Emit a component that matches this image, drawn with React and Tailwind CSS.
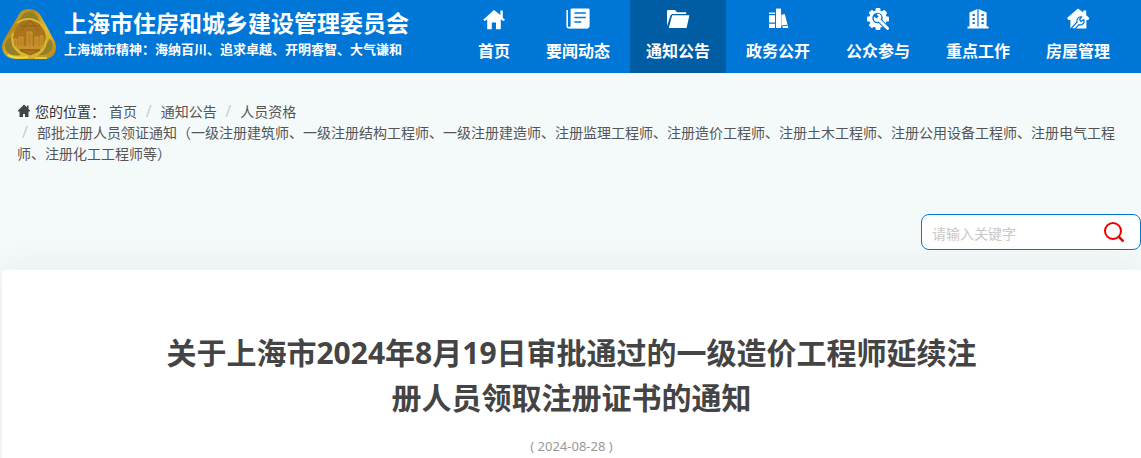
import React, { useState } from 'react';

const HomeIcon = () => (
  <svg className="h-6 w-6" viewBox="0 0 24 24" fill="#fff" aria-hidden="true">
    <path d="M12 3 1.2 12.8 2.6 14 5.2 12.4v9.800h4.600v-6.600h4.200v6.600h4.800v-9.800l2.800 1.600 1.400-1.200-2.200-2V3.600h-2.400V8z" />
  </svg>
);

const NewsIcon = () => (
  <svg className="h-6 w-6" viewBox="0 0 24 24" fill="none" aria-hidden="true">
    <path d="M1.200 3v16.200q0 1.400 1.400 1.400H22" stroke="#fff" strokeWidth="1.600" />
    <path fill="#fff" d="M5.600 1.400h16.600q1.400 0 1.400 1.400v16q0 2.400-1.800 2.400H3q1.600 0 1.600-1.600V2.400q0-1 1-1z" />
    <path d="M8.400 6h11.400M8.400 10.500h11.400M8.400 15h6.800" stroke="#0076d7" strokeWidth="1.700" />
  </svg>
);

const FolderIcon = () => (
  <svg className="h-6 w-6" viewBox="0 0 24 24" fill="#fff" aria-hidden="true">
    <path d="M1 19V4.200Q1 3 2.200 3H9l2 2.200h9.200V7H6L4.600 8.200z" />
    <path d="M6.200 8.200h17.200L20.600 21H2.800z" />
  </svg>
);

const BooksIcon = () => (
  <svg className="h-6 w-6" viewBox="0 0 24 24" fill="#fff" aria-hidden="true">
    <path d="M3 5.500h6v1.500H3zM3 8.200h6v7.200H3zM3 16.800h6V21H3z" />
    <path d="M10 1.600h5V21h-5z" />
    <path d="m15.400 7.800 3.400-.8 3.600 14h-5.200l-1.800-2z" />
    <path d="m15.400 19 6.200-.8" stroke="#0076d7" strokeWidth="1" />
  </svg>
);

const GearIcon = () => (
  <svg className="h-6 w-6" viewBox="0 0 24 24" aria-hidden="true">
    <g fill="#fff">
      <circle cx="12" cy="12" r="8.800" />
      <rect x="9.600" y="1" width="4.800" height="22" rx="1" />
      <rect x="9.600" y="1" width="4.800" height="22" rx="1" transform="rotate(45 12 12)" />
      <rect x="9.600" y="1" width="4.800" height="22" rx="1" transform="rotate(90 12 12)" />
      <rect x="9.600" y="1" width="4.800" height="22" rx="1" transform="rotate(135 12 12)" />
    </g>
    <circle cx="11.500" cy="11" r="5.200" fill="#0076d7" />
    <path d="m12 12 10 10" stroke="#0076d7" strokeWidth="4.600" />
    <path d="m12 12 9.600 9.600" stroke="#fff" strokeWidth="2.800" strokeLinecap="round" />
    <path d="m8 9.500 2.600 1.900 2-2L10.500 7q3-.8 4.500 1.500.8 1.800 0 3.500l-3 3Q8.500 15 7.800 12.500z" fill="#fff" />
  </svg>
);

const BuildingIcon = () => (
  <svg className="h-6 w-6" viewBox="0 0 24 24" aria-hidden="true">
    <path fill="#fff" d="M1.500 19.600h2V5.400L11.400 2v17.600h1.200V2l8 3.400v14.200h2V21.400h-21z" />
    <path d="M7.700 7v11M16.600 7v11" stroke="#0076d7" strokeWidth="2.200" strokeDasharray="2 2" />
  </svg>
);

const HouseToolIcon = () => (
  <svg className="h-6 w-6" viewBox="0 0 24 24" aria-hidden="true">
    <path fill="#fff" d="M12 1.400 1 11l1.400 2h2v8.600h16V13h2l1-2-3.200-2.800V3.600h-3v2z" />
    <path d="M5 21.600 11 15q-.6-3.800 3.200-5.200l1.400.2-2 2.400 1.400 2.200 2.800-2q1.200 3.600-2.200 5-1.400.4-2.600 0l-4 4.200z" fill="#fff" stroke="#0076d7" strokeWidth="1.200" />
  </svg>
);

const Logo = () => (
  <svg className="h-[52px] w-[54px] shrink-0" viewBox="0 0 54 52" aria-hidden="true">
    <defs>
      <linearGradient id="rim" x1="0" y1="0" x2="1" y2="1">
        <stop offset="0" stopColor="#e2bd30" />
        <stop offset=".3" stopColor="#b98817" />
        <stop offset=".6" stopColor="#e3c02f" />
        <stop offset="1" stopColor="#b58116" />
      </linearGradient>
    </defs>
    <path d="M16 8Q19 1 27 1t12 7l12 22q3 4 3 9 0 11-11 12H13Q1 50 0 39q0-5 3-9z" fill="url(#rim)" />
    <path d="M18 12q3-8 9-8 7 0 10 8l3 6-12-5-12 5z" fill="#92802a" />
    <path d="M5 32q-4 6 0 12 5 5 14 3l-9-9V28zM48 30q5 8 1 13-5 5-13 4l8-10z" fill="#92802a" />
    <path d="m28 11 8 3 6 6 2 9-2 7-6 8-8 3-9-3-6-7-2-8 3-9 6-6z" fill="#a9741d" />
    <path d="M15 15q11-8 23 0l12 17M11 25q-4 15 11 22l10 2M44 32q0 12-14 17" fill="none" stroke="#d9b636" strokeWidth="2" />
    <path d="m28 12-9 11M28 12l9 11M18 18h20M18 42h20l-10 5z" fill="none" stroke="#8d5c17" strokeWidth=".8" />
    <path d="M12 31h3v7h-3zM17 29h4v9h-4zM25 24h5v14h-5zM33 29h3v9h-3zM38 28h3v10h-3z" fill="#bd8325" stroke="#d5a231" strokeWidth=".8" />
    <path d="M13 38h28l-3 3H17z" fill="#c8922a" />
    <path d="M6 47q7 4 20 2M33 50h12" fill="none" stroke="#f2e03a" strokeWidth="1.500" />
  </svg>
);

const menus = [
  { name: '首页', icon: HomeIcon },
  { name: '要闻动态', icon: NewsIcon },
  { name: '通知公告', icon: FolderIcon, active: true },
  { name: '政务公开', icon: BooksIcon },
  { name: '公众参与', icon: GearIcon },
  { name: '重点工作', icon: BuildingIcon },
  { name: '房屋管理', icon: HouseToolIcon },
];

const crumbs = [
  '通知公告',
  '人员资格',
  '部批注册人员领证通知（一级注册建筑师、一级注册结构工程师、一级注册建造师、注册监理工程师、注册造价工程师、注册土木工程师、注册公用设备工程师、注册电气工程师、注册化工工程师等）',
];

const Header = () => (
  <header className="flex h-[73px] items-start justify-between bg-[#0076d7] pr-[15px] text-white">
    <a href="#" className="flex items-start gap-2 pl-0.5 pt-2">
      <Logo />
      <div>
        <p className="text-[23px] leading-[30px] font-bold">上海市住房和城乡建设管理委员会</p>
        <p className="text-[13px] leading-[22px] font-bold">上海城市精神：海纳百川、追求卓越、开明睿智、大气谦和</p>
      </div>
    </a>
    <nav className="flex h-full gap-1">
      {menus.map(({ name, icon: Icon, active }) => (
        <a
          key={name}
          href="#"
          className={`flex flex-col items-center px-4 pt-[7px] ${active ? 'bg-[#005da3]' : ''}`}
        >
          <Icon />
          <span className="pt-2 text-base leading-6 font-bold">{name}</span>
        </a>
      ))}
    </nav>
  </header>
);

const Breadcrumb = () => (
  <nav className="pt-7 pr-4 pl-[17px] text-sm leading-[21px] text-[#555]">
    <svg className="mr-1 inline-block h-3.5 w-3.5 align-[-1px]" viewBox="0 0 14 14" fill="#444" aria-hidden="true">
      <path d="M7 0.500 1 6.500v1h1.500v5.500H6V10h2v3h3.500V7.500H13v-1L11.500 5V1.500H10V3.200z" />
    </svg>
    <span className="mr-1 inline-block text-[#333]">您的位置：</span>
    <ol className="inline">
      <li className="inline-block">
        <a href="#">首页</a>
      </li>
      {crumbs.map((item) => (
        <React.Fragment key={item}>
          {' '}
          <li className="inline-block align-top">
            <span className="inline-block w-5 pr-1 text-center text-base leading-none text-[#ccc]">/</span>
            <a href="#">{item}</a>
          </li>
        </React.Fragment>
      ))}
    </ol>
  </nav>
);

const SearchBox = () => {
  const [keyword, setKeyword] = useState('');

  return (
    <form
      className="ml-auto flex h-9 w-[220px] items-center rounded-lg border border-[#0076d7] bg-white pr-4 pl-2.5"
      onSubmit={(e) => e.preventDefault()}
    >
      <input
        type="text"
        aria-label="请输入关键字"
        placeholder="请输入关键字"
        value={keyword}
        onChange={(e) => setKeyword(e.target.value)}
        className="min-w-0 flex-1 pt-1 text-sm outline-none placeholder:text-[#c8c8c8]"
      />
      <button type="submit" aria-label="搜索">
        <svg className="h-5 w-5" viewBox="0 0 20 20" fill="none" stroke="#f00000" strokeWidth="2" aria-hidden="true">
          <circle cx="9" cy="9" r="8" />
          <path d="m14.500 14.500 5 5" strokeWidth="2.500" />
        </svg>
      </button>
    </form>
  );
};

const App = () => {
  return (
    <div className="flex min-h-screen flex-col overflow-hidden bg-[#f4fafa] font-['Noto_Sans','Noto_Sans_CJK_SC',sans-serif]">
      <Header />
      <Breadcrumb />
      <div className="pt-[50px] pb-5">
        <SearchBox />
      </div>
      <main className="ml-0.5 flex-1 rounded-tl-sm bg-white pt-15 text-center shadow-[0_0_40px_rgba(0,40,80,0.07)]">
        <h1 className="mx-auto w-[72%] text-[30px] leading-[45px] font-bold text-[#444]">
          关于上海市2024年8月19日审批通过的一级造价工程师延续注册人员领取注册证书的通知
        </h1>
        <p className="pt-4 text-[13px] leading-5 text-[#999]">( 2024-08-28 )</p>
      </main>
    </div>
  );
};

export default App;
